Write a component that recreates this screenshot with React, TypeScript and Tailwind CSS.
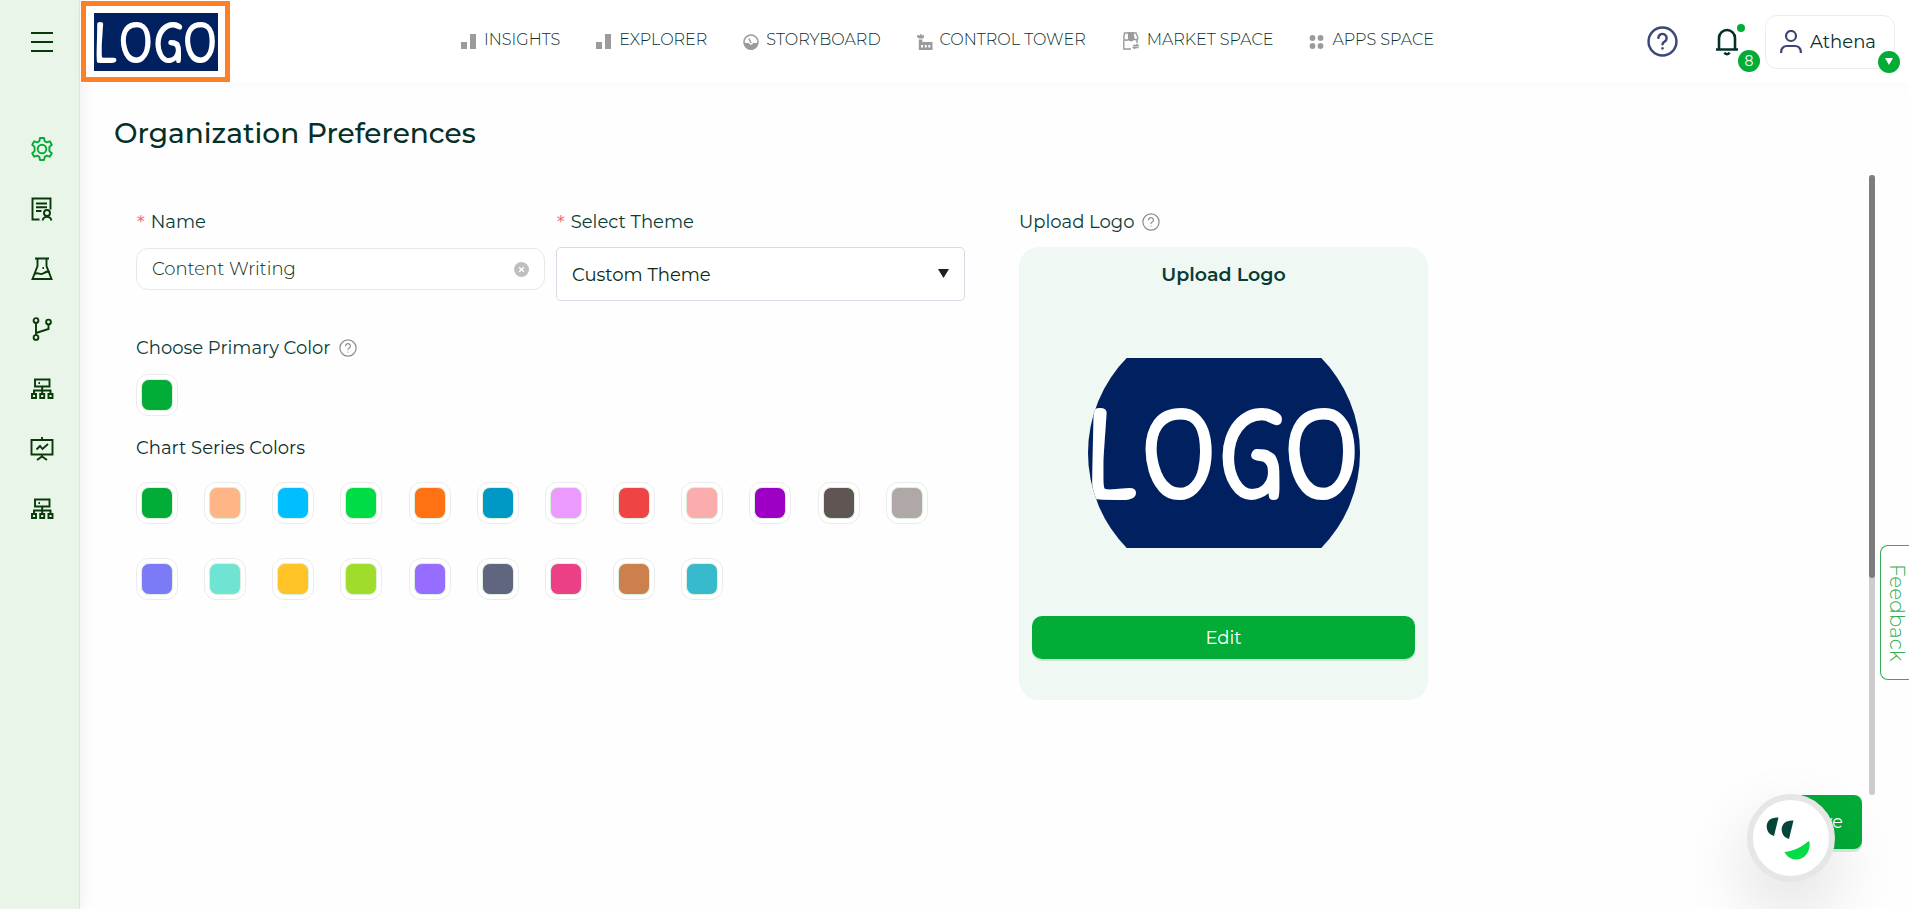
import { useState } from "react";
import type { ReactNode } from "react";

const seriesColors = [
  "#03ab37", "#ffb586", "#00bfff", "#00dc46", "#ff7214", "#0099c6",
  "#eb9aff", "#f04343", "#fbadad", "#9d00c4", "#5f5553", "#b0a7a7",
  "#7b7bf7", "#70e4d3", "#ffc328", "#a0dd2b", "#966dff", "#606580",
  "#eb4085", "#cb804e", "#37bbcc",
];

function Logo({ className, fontSize, width, height }: { className?: string; fontSize: number; width: number; height: number }) {
  return (
    <svg className={className} viewBox={`0 0 ${width} ${height}`} overflow="visible" role="img" aria-label="Logo">
      <rect width={width} height={height} fill="#00205f" />
      <text
        x={width / 2}
        y={height / 2 + fontSize * 0.34}
        textAnchor="middle"
        fontFamily="'Patrick Hand', 'Comic Neue', Roboto, sans-serif"
        fontSize={fontSize}
        fill="#ffffff"
      >
        LOGO
      </text>
    </svg>
  );
}

function BarsIcon() {
  return (
    <svg width="16" height="16" viewBox="0 0 16 16" fill="#9b9b9b">
      <path d="M0 8h6v7H0zM9 0h6v15H9z" />
    </svg>
  );
}

function GaugeIcon() {
  return (
    <svg width="16" height="16" viewBox="0 0 16 16">
      <circle cx="8" cy="8" r="7" fill="none" stroke="#9b9b9b" strokeWidth="1.6" />
      <path d="M1 9h4.800a2.300 2.300 0 0 0 4.400 0H15A7 7 0 0 1 1 9z" fill="#9b9b9b" />
      <path d="M6 4.500l2 4.500" stroke="#9b9b9b" strokeWidth="1.500" />
    </svg>
  );
}

function TowerIcon() {
  return (
    <svg width="16" height="16" viewBox="0 0 16 16" fill="#9b9b9b">
      <path d="M3.200 0h1.300v1.300H7V3L6 4.500H2L0 3V1.300h3.200z" />
      <path fillRule="evenodd" d="M1.800 5.500h3.500V8H15.500v8H1.800zM4 11v2.500h2V11zm3.700 0v2.500h2V11zm3.600 0v2.500h2V11z" />
    </svg>
  );
}

function MarketIcon() {
  return (
    <svg width="18" height="18" viewBox="0 0 18 18" fill="none" stroke="#9b9b9b" strokeWidth="1.400">
      <path d="M2.500 1h11.500l1.800 4.500a2 2 0 0 1-4 .5 2.500 2.500 0 0 1-5 0 2 2 0 0 1-5-.5z" />
      <path d="M6.500 1h4.500l.8 5a2.400 2.400 0 0 1-5 0z" fill="#9b9b9b" />
      <path d="M1.800 8v9H9M15 8v3" />
      <path d="M11 13.500h5l-1.500-1.500M16.500 15.500h-5l1.500 1.500" />
    </svg>
  );
}

function AppsIcon() {
  return (
    <svg width="16" height="16" viewBox="0 0 16 16" fill="#9b9b9b">
      <circle cx="3.500" cy="4" r="2.900" />
      <circle cx="11.500" cy="4" r="2.900" />
      <circle cx="3.500" cy="12" r="2.900" />
      <circle cx="11.500" cy="12" r="2.900" />
    </svg>
  );
}

const navItems = [
  { label: "INSIGHTS", icon: <BarsIcon /> },
  { label: "EXPLORER", icon: <BarsIcon /> },
  { label: "STORYBOARD", icon: <GaugeIcon /> },
  { label: "CONTROL TOWER", icon: <TowerIcon /> },
  { label: "MARKET SPACE", icon: <MarketIcon /> },
  { label: "APPS SPACE", icon: <AppsIcon /> },
];

function SideIcon({ children }: { children: ReactNode }) {
  return (
    <svg width="24" height="24" viewBox="0 0 24 24" fill="none" stroke="currentColor" strokeWidth="1.900">
      {children}
    </svg>
  );
}

const networkIcon = (
  <SideIcon>
    <path d="M5 2.500h14.500v7H5zM12.200 9.500v7.500M4 17v-3.500h16.500V17" />
    <path d="M2 17h4v4H2zM10.200 17h4v4h-4zM18.500 17h4v4h-4z" />
    <path d="M8.500 6h1.500" strokeWidth="2" />
  </SideIcon>
);

const sideItems = [
  {
    label: "Settings",
    active: true,
    icon: (
      <SideIcon>
        <path
          d="M10 1h4l.7 3.200 2 1.100 3.100-1 2 3.400-2.400 2.200v4.200l2.400 2.200-2 3.400-3.100-1-2 1.100L14 23h-4l-.7-3.200-2-1.100-3.100 1-2-3.400 2.400-2.200V9.900L2.200 7.700l2-3.400 3.100 1 2-1.100z"
          strokeLinejoin="round"
        />
        <circle cx="12" cy="12" r="4.300" />
      </SideIcon>
    ),
  },
  {
    label: "Reports",
    icon: (
      <SideIcon>
        <path d="M9.500 22.500H2.500V1.500H20.500v11M6 6.500h11M6 10.200h11M6 14h5.500" />
        <circle cx="17" cy="16" r="3" />
        <path d="M12.500 23.500a4.600 4.600 0 0 1 9 0" />
      </SideIcon>
    ),
  },
  {
    label: "Experiments",
    icon: (
      <SideIcon>
        <path d="M5 1.500h14M7.500 1.500V9L2.500 22h19L16.500 9V1.500" />
        <path d="M5 17c3-2.500 5 1.500 8-.5s4-2.500 6.500-1.500" />
        <path d="M12.500 11h1.500" strokeWidth="2" />
      </SideIcon>
    ),
  },
  {
    label: "Branches",
    icon: (
      <SideIcon>
        <circle cx="6" cy="3.500" r="2.400" />
        <circle cx="6" cy="20.500" r="2.400" />
        <circle cx="18.500" cy="5" r="2.400" />
        <path d="M6 6v12M6 16l12.500-4V7.500" />
      </SideIcon>
    ),
  },
  { label: "Network", icon: networkIcon },
  {
    label: "Presentations",
    icon: (
      <SideIcon>
        <path d="M1.500 3h21v14.500h-21zM12 0v3M12 17.500V20M7 23l5-3.500 5 3.500" />
        <path d="M6.500 12.500l3.500-3.500 2.500 3L18 7" />
      </SideIcon>
    ),
  },
  { label: "Topology", icon: networkIcon },
];

function HelpIcon({ size, strokeWidth }: { size: number; strokeWidth: number }) {
  return (
    <svg width={size} height={size} viewBox="0 0 24 24" fill="none" stroke="currentColor" strokeWidth={strokeWidth} strokeLinecap="round" strokeLinejoin="round">
      <circle cx="12" cy="12" r="10.800" />
      <path d="M8.800 9.200a3.200 3.200 0 1 1 4.800 2.900c-1 .6-1.600 1-1.600 2" />
      <path d="M12 17.300v.1" />
    </svg>
  );
}

function Required() {
  return <span className="mr-[5px] font-['DejaVu_Sans_Mono',monospace] text-base text-[#f5646c]">*</span>;
}

function Swatch({ color, label }: { color: string; label: string }) {
  return (
    <button aria-label={label} className="flex size-[42px] items-center justify-center rounded-xl border border-[#ececec] bg-white">
      <span className="size-8 rounded-lg border border-[#dcefdc]" style={{ backgroundColor: color }} />
    </button>
  );
}

export default function App() {
  const [name, setName] = useState("Content Writing");
  const [theme, setTheme] = useState("Custom Theme");

  return (
    <div className="relative flex h-screen overflow-hidden bg-[#fefefe] font-[Montserrat,Inter,sans-serif] text-[#0b3b35]">
      {/* Sidebar */}
      <aside className="flex w-20 shrink-0 flex-col items-center border-r border-[#dbe5db] bg-[#eaf5ea] pl-[5px] pt-[30px] text-[#083a08] shadow-[0_0_16px_rgba(0,0,0,0.08)]">
        <button aria-label="Toggle menu" className="flex size-6 items-center justify-center">
          <svg width="22" height="22" viewBox="0 0 22 22" stroke="currentColor" strokeWidth="2">
            <path d="M0 2h22M0 11h22M0 20h22" />
          </svg>
        </button>
        <nav className="mt-[83px] flex flex-col gap-9">
          {sideItems.map((item) => (
            <a key={item.label} href="#" aria-label={item.label} className={item.active ? "text-[#03ab37]" : undefined}>
              {item.icon}
            </a>
          ))}
        </nav>
      </aside>

      <div className="flex min-w-0 flex-1 flex-col">
        {/* Header */}
        <header className="relative z-10 flex h-[83px] shrink-0 items-center bg-white pr-[14px] shadow-[0_2px_12px_rgba(0,0,0,0.02)]">
          <a href="#" className="ml-px flex h-[81px] w-[149px] items-center justify-center border-5 border-[#ff7f27] bg-white">
            <Logo className="h-[58px] w-[124px]" fontSize={62} width={124} height={58} />
          </a>
          <nav className="flex flex-1 items-center justify-center gap-9 pb-1 pl-[18px] text-base font-light leading-5 text-[#0b2f2b]">
            {navItems.map((item) => (
              <a key={item.label} href="#" className="flex items-end gap-[7px] whitespace-nowrap">
                {item.icon}
                {item.label}
              </a>
            ))}
          </nav>
          <div className="flex items-center">
            <button aria-label="Help" className="text-[#3a4778]">
              <HelpIcon size={31} strokeWidth={1.9} />
            </button>
            <button aria-label="Notifications" className="relative ml-[37px] mr-[26px] text-[#04302a]">
              <svg width="24" height="28" viewBox="0 0 24 28" fill="none" stroke="currentColor" strokeWidth="2.600" strokeLinejoin="round">
                <path d="M1 21.500h22M4 21.500V10a8 8 0 0 1 16 0v11.500" />
                <path d="M9.500 24.500a2.700 2.700 0 0 0 5 0" />
              </svg>
              <span className="absolute -top-1 left-[22px] size-2 rounded-full bg-[#03ab37]" />
              <span className="absolute -bottom-4 left-[23px] flex size-[22px] items-center justify-center rounded-full bg-[#03ab37] text-sm text-white">8</span>
            </button>
            <button className="relative flex h-[54px] w-[130px] items-center gap-2 rounded-xl border border-[#ececec] pl-[14px] text-lg text-[#0b2f2b]">
              <svg width="22" height="24" viewBox="0 0 22 24" fill="none" stroke="#3a4778" strokeWidth="2.200">
                <circle cx="11" cy="6" r="5" />
                <path d="M1.200 23v-1.500a5.500 5.500 0 0 1 5.500-5.500h8.600a5.500 5.500 0 0 1 5.500 5.500V23" />
              </svg>
              Athena
              <span className="absolute -bottom-[5px] -right-[6px] flex size-[22px] items-center justify-center rounded-full bg-[#03ab37]">
                <svg width="8" height="7" viewBox="0 0 8 7" fill="#ffffff">
                  <path d="M0 0h8L4 7z" />
                </svg>
              </span>
            </button>
          </div>
        </header>

        {/* Page */}
        <main className="flex min-h-0 flex-1 flex-col pl-[34px] pr-[34px] pt-[30px]">
          <h1 className="text-[28px] font-medium leading-10 text-[#04302a]">Organization Preferences</h1>

          <div className="mt-[22px] flex min-h-0 flex-1 pl-[22px]">
            <div className="grid min-w-0 flex-1 grid-cols-[829fr_409fr_387fr] gap-[54px] overflow-hidden pt-8 text-lg">
              <div>
                <div className="grid grid-cols-2 gap-[11px]">
                  <div>
                    <label htmlFor="org-name" className="flex items-center leading-[30px]">
                      <Required />
                      Name
                    </label>
                    <div className="mt-[11px] flex h-[42px] items-center rounded-xl border border-[#e8e8e8] bg-white px-[15px]">
                      <input
                        id="org-name"
                        value={name}
                        onChange={(e) => setName(e.target.value)}
                        className="min-w-0 flex-1 font-light text-[#0b2a12] outline-none"
                      />
                      <button aria-label="Clear name" onClick={() => setName("")}>
                        <svg width="15" height="15" viewBox="0 0 16 16">
                          <circle cx="8" cy="8" r="8" fill="#bfbfbf" />
                          <path d="M5.500 5.500l5 5M10.500 5.500l-5 5" stroke="#ffffff" strokeWidth="1.500" />
                        </svg>
                      </button>
                    </div>
                  </div>
                  <div>
                    <label htmlFor="org-theme" className="flex items-center leading-[30px]">
                      <Required />
                      Select Theme
                    </label>
                    <div className="relative mt-[10px]">
                      <select
                        id="org-theme"
                        value={theme}
                        onChange={(e) => setTheme(e.target.value)}
                        className="h-[54px] w-full appearance-none rounded-[5px] border border-[#d5dbe5] bg-white px-[15px] pt-[2px] text-[#0b2a12] outline-none"
                      >
                        <option>Custom Theme</option>
                      </select>
                      <svg className="pointer-events-none absolute right-4 top-[22px]" width="11" height="9" viewBox="0 0 11 9" fill="#1f1f1f">
                        <path d="M0 0h11L5.500 9z" />
                      </svg>
                    </div>
                  </div>
                </div>

                <h2 className="mt-8 flex items-center gap-2 leading-[30px]">
                  Choose Primary Color
                  <span className="text-[#8c8c8c]">
                    <HelpIcon size={18} strokeWidth={1.6} />
                  </span>
                </h2>
                <div className="mt-[11px]">
                  <Swatch color="#03ab37" label="Primary color" />
                </div>

                <h2 className="mt-[17px] leading-[30px] text-[#0b2f2b]">Chart Series Colors</h2>
                <div className="mt-[19px] grid grid-cols-12 gap-y-[34px] pr-[11px]">
                  {seriesColors.map((color, i) => (
                    <Swatch key={color} color={color} label={`Series color ${i + 1}`} />
                  ))}
                </div>
              </div>

              <div>
                <h2 className="flex items-center gap-2 leading-[30px]">
                  Upload Logo
                  <span className="text-[#8c8c8c]">
                    <HelpIcon size={18} strokeWidth={1.6} />
                  </span>
                </h2>
                <section className="mt-[10px] flex flex-col items-center rounded-[20px] bg-[#eff8f3] px-[13px] pb-[41px] pt-3">
                  <h3 className="text-[19px] font-semibold leading-8 text-[#0b3b35]">Upload Logo</h3>
                  <div className="mt-[26px] flex size-[272px] items-center justify-center overflow-hidden rounded-full">
                    <Logo className="h-[190px] w-[272px] shrink-0" fontSize={138} width={272} height={190} />
                  </div>
                  <button className="mt-[27px] h-[43px] w-full rounded-[10px] bg-[#03ab37] text-lg text-white shadow-[0_2px_0_rgba(5,130,40,0.15)]">
                    Edit
                  </button>
                </section>
              </div>
            </div>

            {/* Scrollbar */}
            <div className="w-[6px] shrink-0 rounded-full bg-[#cccccc]">
              <div className="h-[65%] rounded-full bg-[#7d7d7d]" />
            </div>
          </div>

          <footer className="flex h-[114px] shrink-0 items-start justify-end pr-[13px]">
            <button className="h-[54px] w-20 rounded-lg bg-[#03ab37] text-lg text-white shadow-[0_3px_0_rgba(5,130,40,0.15)]">Save</button>
          </footer>
        </main>
      </div>

      {/* Feedback tab */}
      <button className="absolute right-0 top-[545px] flex h-[135px] w-[29px] items-center justify-center rounded-l-lg border border-r-0 border-[#33ae53] bg-white pl-1 text-xl font-light leading-6 text-[#33ae53] [writing-mode:vertical-rl]">
        Feedback
      </button>

      {/* Chat bubble */}
      <button aria-label="Open chat" className="absolute bottom-[27px] right-[74px] z-20 flex size-[88px] items-center justify-center rounded-full border-[6px] border-[#e6e6e6] bg-white shadow-[0_28px_60px_10px_rgba(0,0,0,0.09)]">
        <svg width="75" height="75" viewBox="0 0 75 75">
          <path d="M24.500 16.500l-4.500 18.500c-5-1.500-7.500-5.500-7.300-10.300.3-5 4.500-8.700 11.800-8.200z" fill="#034538" />
          <path d="M39.500 19.500l-4.500 18.500c-5-1.500-7.500-5.500-7.300-10.300.3-5 4.500-8.700 11.800-8.200z" fill="#034538" />
          <path d="M30.500 51c9-1 17-4.500 24-11 1.500 1 1.300 3.500 1 6-1 7-6.500 12.500-13 12.500-5.500 0-10-3-12-7.500z" fill="#03dc47" />
        </svg>
      </button>
    </div>
  );
}
